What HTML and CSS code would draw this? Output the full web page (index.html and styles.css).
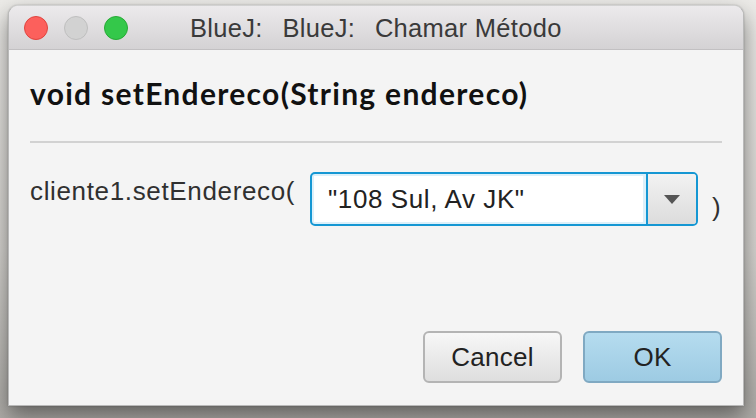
FILE: index.html
```html
<!DOCTYPE html>
<html>
<head>
<meta charset="utf-8">
<link rel="stylesheet" href="styles.css">
</head>
<body>
<div class="desk">
  <div class="window">
    <div class="titlebar">
      <div class="lights">
        <span class="light red"></span>
        <span class="light grey"></span>
        <span class="light green"></span>
      </div>
      <div class="title"><span class="app">BlueJ:  BlueJ:  </span>Chamar Método</div>
    </div>
    <div class="content">
      <h1 class="sig">void setEndereco(String endereco)</h1>
      <div class="sep"></div>
      <div class="call">
        <span class="label">cliente1.setEndereco(</span>
        <div class="combo">
          <div class="field">"108 Sul, Av JK"</div>
          <div class="arrow"><span class="tri"></span></div>
        </div>
        <span class="paren">)</span>
      </div>
      <div class="spacer"></div>
      <div class="buttons">
        <button class="btn cancel">Cancel</button>
        <button class="btn ok">OK</button>
      </div>
    </div>
  </div>
</div>
</body>
</html>
```
FILE: styles.css
```css
html, body {
  margin: 0;
  padding: 0;
}
body {
  width: 756px;
  height: 418px;
  overflow: hidden;
  background: linear-gradient(180deg, #ecebe8 0%, #d6d4d0 60%, #aeaca8 100%);
  font-family: "Liberation Sans", Arial, sans-serif;
}
.desk {
  padding: 5px 12px 0 8px;
}
.window {
  width: 736px;
  height: 401px;
  box-sizing: border-box;
  display: flex;
  flex-direction: column;
  background: #f4f4f4;
  border: 1px solid #b9b9b9;
  border-top-color: #d2d2d2;
  border-radius: 10px 10px 0 0;
  box-shadow: 0 10px 22px rgba(0,0,0,0.45), 0 0 2px rgba(0,0,0,0.25);
}
.titlebar {
  height: 43px;
  flex: none;
  display: flex;
  align-items: center;
  background: linear-gradient(180deg, #eceaec 0%, #d4d2d4 100%);
  border-bottom: 1px solid #c2c0c2;
  border-radius: 9px 9px 0 0;
}
.lights {
  display: flex;
  gap: 16px;
  padding-left: 15px;
  padding-top: 1px;
}
.light {
  width: 22px;
  height: 22px;
  border-radius: 50%;
  border: 1px solid;
}
.red { background: #fc605c; border-color: #e0443e; }
.grey { background: #d2d2d2; border-color: #bfbfbf; }
.green { background: #34c84a; border-color: #27aa35; }
.title {
  white-space: pre;
  font-size: 25.5px;
  letter-spacing: 0.3px;
  color: #3a3a3a;
  margin-left: 62px;
  padding-top: 1px;
}
.app {
  word-spacing: 2.5px;
}
.content {
  flex: 1;
  display: flex;
  flex-direction: column;
  padding: 0 21px 22px 21px;
}
.sig {
  margin: 0;
  padding-top: 26px;
  font-family: Lato, "Liberation Sans", sans-serif;
  font-weight: 700;
  font-size: 30px;
  letter-spacing: 1.3px;
  line-height: 34px;
  color: #111;
}
.sep {
  height: 2px;
  background: #d2d2d2;
  margin-top: 31px;
}
.call {
  display: flex;
  margin-top: 29px;
  align-items: flex-start;
}
.label {
  font-size: 26px;
  letter-spacing: 0.65px;
  line-height: 30px;
  color: #303030;
  margin-top: 4px;
  width: 280px;
  flex: none;
}
.combo {
  width: 388px;
  height: 54px;
  box-sizing: border-box;
  border: 2px solid #1597d3;
  border-radius: 5px;
  display: flex;
  background: #dcf0fa;
  padding: 2px;
}
.field {
  flex: 1;
  background: #fff;
  font-size: 26px;
  letter-spacing: 0.6px;
  line-height: 46px;
  color: #222;
  padding-left: 14px;
  margin-right: 3px;
}
.arrow {
  width: 48px;
  border-left: 2px solid #1597d3;
  margin: -2px -2px -2px 0;
  background: linear-gradient(180deg, #f2f2f2 0%, #dcdcdc 100%);
  border-radius: 0 3px 3px 0;
  display: flex;
  align-items: center;
  justify-content: center;
}
.tri {
  width: 0;
  height: 0;
  border-left: 8px solid transparent;
  border-right: 8px solid transparent;
  border-top: 9px solid #555;
}
.paren {
  align-self: flex-end;
  font-size: 26px;
  line-height: 30px;
  color: #303030;
  margin-left: 14px;
  margin-bottom: 4px;
}
.spacer {
  flex: 1;
}
.buttons {
  display: flex;
  justify-content: flex-end;
  gap: 21px;
}
.btn {
  width: 139px;
  height: 52px;
  font-family: "Liberation Sans", Arial, sans-serif;
  font-size: 26px;
  letter-spacing: 0.3px;
  color: #222;
  border-radius: 6px;
  padding: 0;
}
.cancel {
  border: 2px solid #b4b4b4;
  background: linear-gradient(180deg, #f7f7f7 0%, #dedede 100%);
}
.ok {
  border: 2px solid #80a9c2;
  background: linear-gradient(180deg, #b5dcef 0%, #9dcbe3 100%);
}
```
